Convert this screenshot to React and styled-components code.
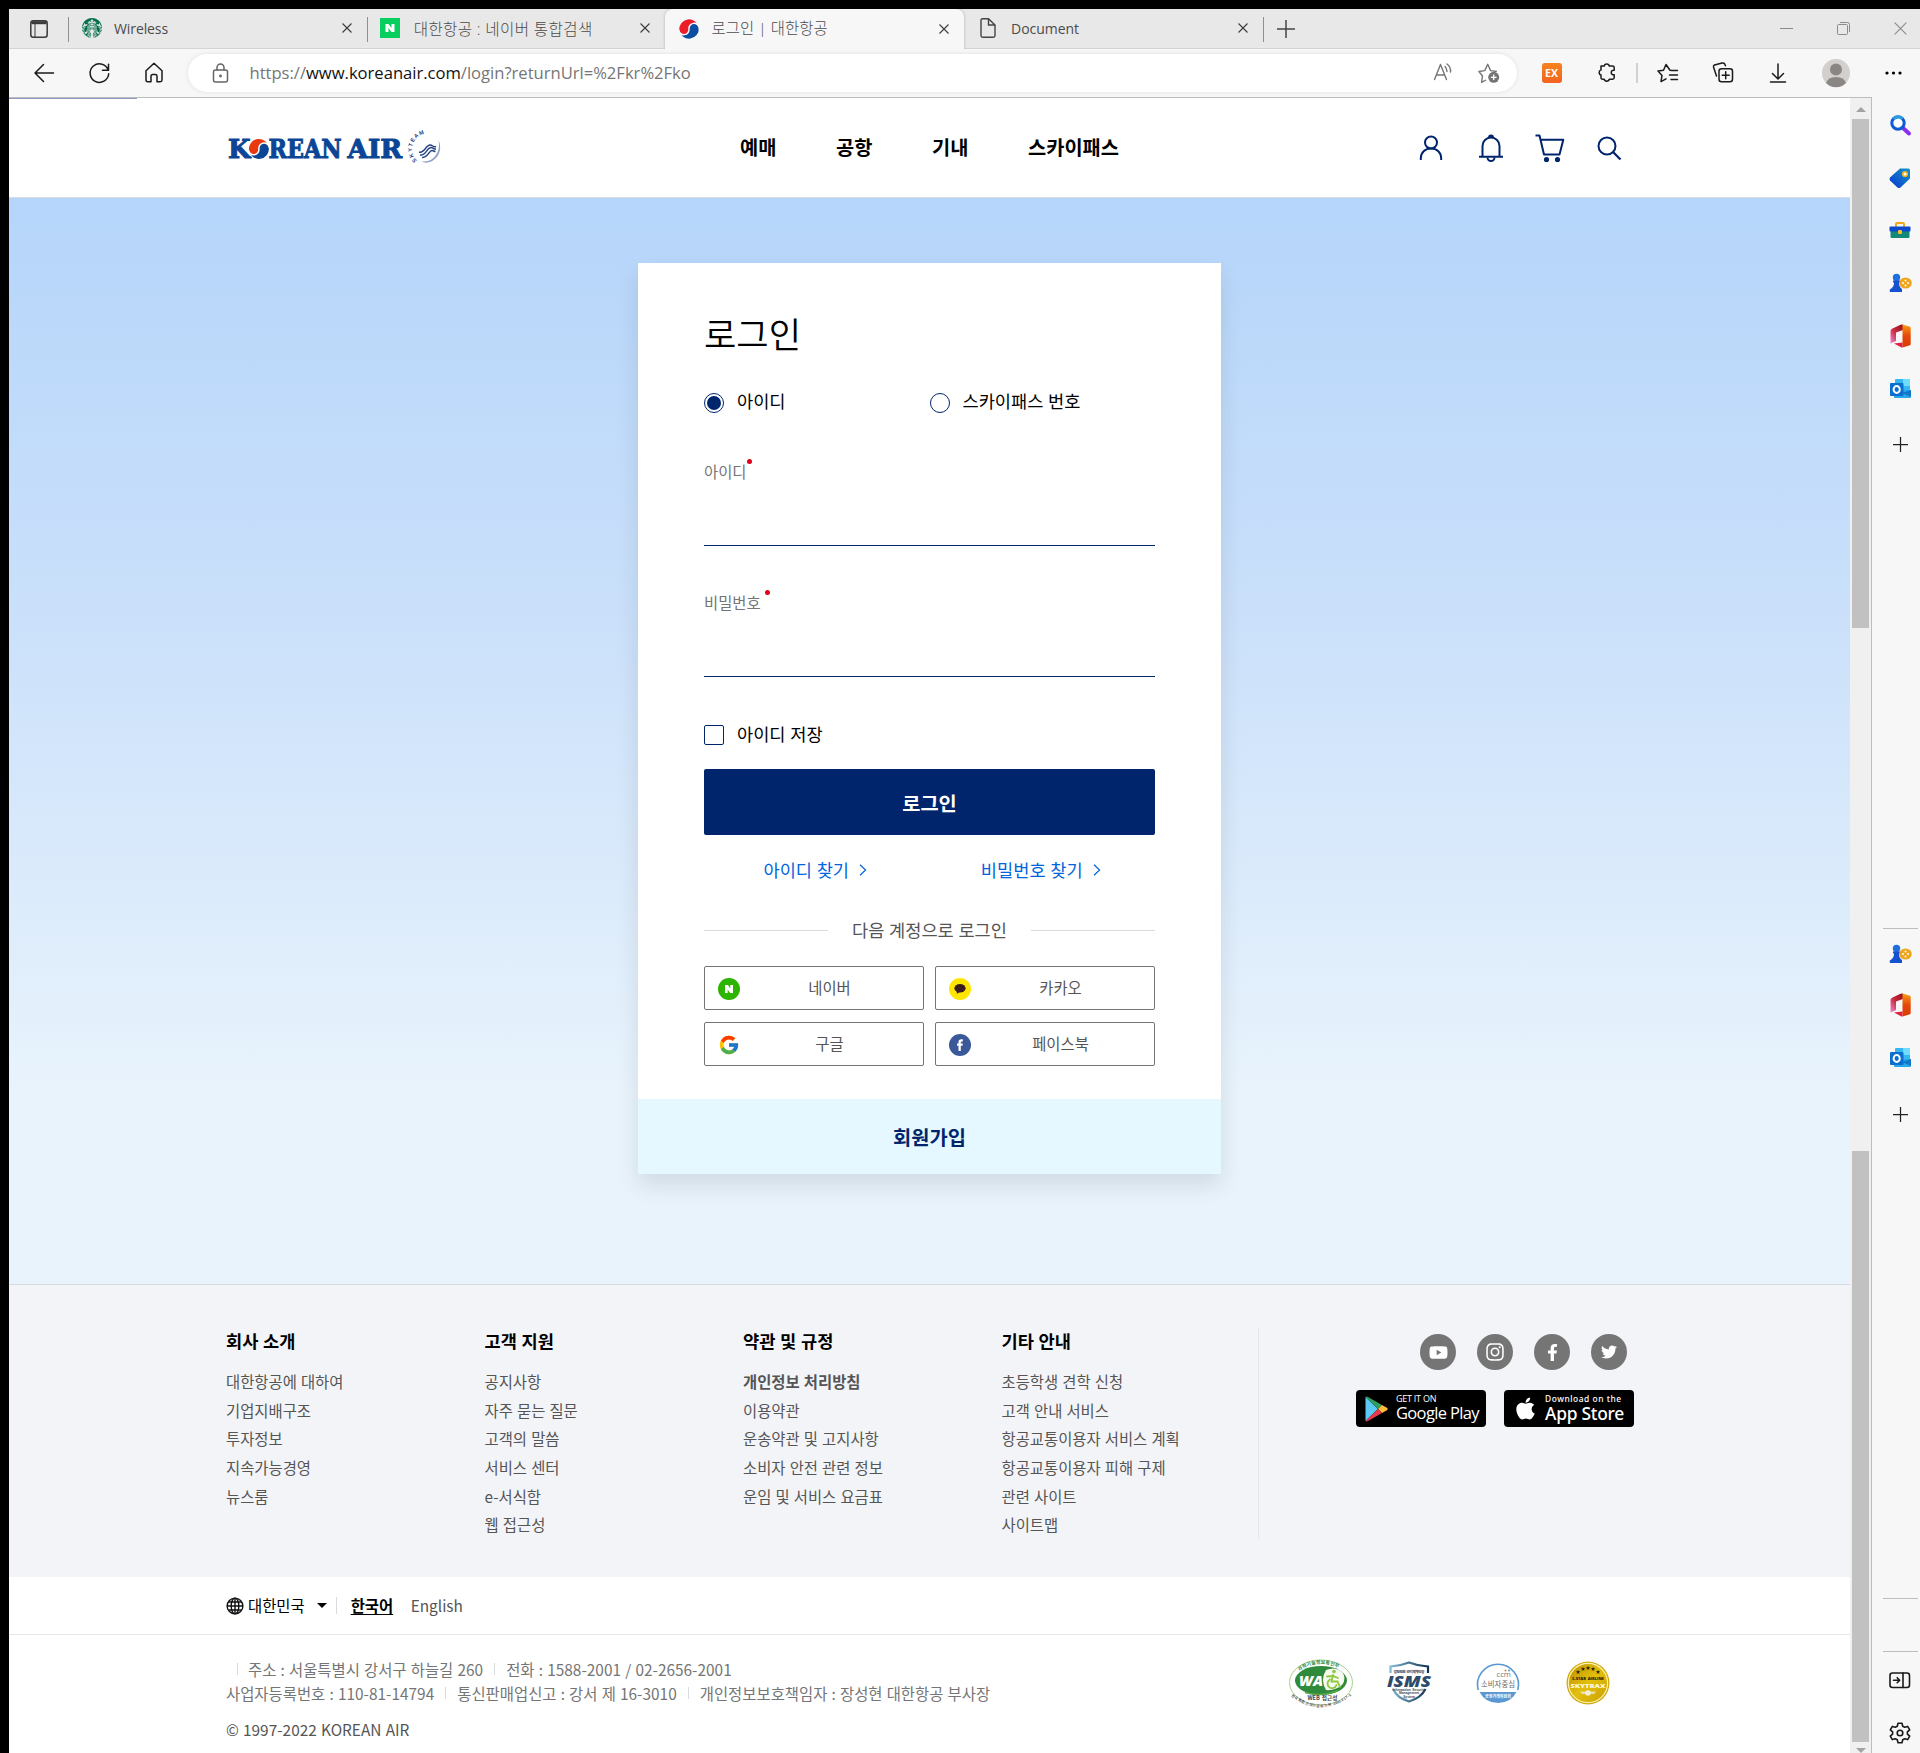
import React from "react";
import styled, { createGlobalStyle, css } from "styled-components";
import { FaYoutube, FaInstagram, FaFacebookF, FaTwitter, FaApple } from "react-icons/fa";
import { FcGoogle } from "react-icons/fc";
import { SiStarbucks } from "react-icons/si";

const kr = `"Noto Sans CJK KR", "Noto Sans", sans-serif`;
const ui = `"Open Sans", "Noto Sans CJK KR", sans-serif`;
const navy = "#00256c";

const GlobalStyle = createGlobalStyle`
  * { box-sizing: border-box; }
  body { margin: 0; background: #000; }
  svg { display: block; flex: none; overflow: visible; }
  h1, h2, ul, p { margin: 0; padding: 0; font-weight: inherit; font-size: inherit; }
  ul { list-style: none; }
  button { font: inherit; padding: 0; margin: 0; cursor: pointer; word-spacing: inherit; }
`;

/* ---------- browser window ---------- */

const Desktop = styled.div`
  width: 1920px;
  height: 1753px;
  padding: 9px 0 0 9px;
  background: #000;
  overflow: hidden;
`;

const TabStrip = styled.div`
  display: flex;
  height: 40px;
  background: #e8e8e8;
  border-bottom: 1px solid #d4d4d4;
`;

const TabActions = styled.div`
  width: 59px;
  padding: 11px 0 0 21px;
`;

const Tab = styled.div`
  display: flex;
  align-items: center;
  width: 298.7px;
  height: ${(p) => (p.$active ? 40 : 39)}px;
  padding: 0 15px 1px ${(p) => p.$left || 14}px;
  font-family: ${ui};
  font-size: ${(p) => p.$size || 14}px;
  line-height: 20px;
  letter-spacing: ${(p) => p.$track || 0}px;
  color: #4b4b4b;
  ${(p) =>
    p.$active &&
    css`
      background: #f7f7f7;
      border-radius: 8px 8px 0 0;
      box-shadow: 0 0 3px rgba(0, 0, 0, 0.25);
      clip-path: inset(0 -4px 0 -4px);
    `}
`;

const TabTitle = styled.span`
  flex: 1;
  margin-left: ${(p) => p.$gap || 12}px;
  padding-top: 1px;
  white-space: nowrap;
  font-weight: ${(p) => p.$weight || 400};
`;

const TabDivider = styled.i`
  width: 1px;
  height: 25px;
  margin-top: 8px;
  margin-right: -1px;
  background: #8f8f8f;
`;

const NewTab = styled.div`
  padding: 11px 0 0 14px;
  flex: 1;
`;

const WindowControls = styled.div`
  display: flex;
  align-items: center;
  gap: 44px;
  padding: 0 13.500px 1px 0;
`;

const Toolbar = styled.div`
  display: flex;
  align-items: center;
  height: 48px;
  padding: 0 0 1px 24px;
  background: #f7f7f7;
`;

const NavButtons = styled.div`
  display: flex;
  align-items: center;
  gap: 34px;
  width: 156px;
`;

const AddressBar = styled.div`
  display: flex;
  align-items: center;
  flex: none;
  width: 1329px;
  height: 38px;
  padding: 0 17px 0 24px;
  background: #fff;
  border-radius: 19px;
  box-shadow: 0 0 4px rgba(0, 0, 0, 0.1);
`;

const Url = styled.span`
  flex: 1;
  margin-left: 21px;
  font: 16.6px/22px ${ui};
  letter-spacing: -0.01px;
  color: #767676;
  b {
    font-weight: 400;
    color: #111;
  }
`;

const UrlTools = styled.div`
  display: flex;
  gap: 23.500px;
`;

const ExtTools = styled.div`
  display: flex;
  align-items: center;
  margin-left: 7.5px;
`;

const ToolSlot = styled.div`
  display: flex;
  align-items: center;
  justify-content: center;
  flex: none;
  width: ${(p) => p.$width || 55}px;
`;

const ExBadge = styled.span`
  width: 20px;
  height: 20px;
  border-radius: 3px;
  background: linear-gradient(#f58220, #f2641f);
  color: #fff;
  font: 700 10.5px/20px "Open Sans", sans-serif;
  text-align: center;
`;

const ToolDivider = styled.i`
  width: 2px;
  height: 20px;
  background: #d0d0d0;
`;

const WindowBody = styled.div`
  display: flex;
  height: 1656px;
`;

const Viewport = styled.div`
  display: flex;
  width: 1863px;
  border-top: 1px solid #bdbdbd;
  border-right: 1px solid #bdbdbd;
  position: relative;
`;

const LoadingBar = styled.i`
  position: absolute;
  top: 0;
  left: 0;
  width: 128px;
  height: 1px;
  background: #8f9ac4;
`;

const Page = styled.div`
  width: 1841px;
  background: #fff;
  font-family: ${kr};
  color: #000;
  word-spacing: 0.7px;
`;

const Scrollbar = styled.div`
  display: flex;
  flex-direction: column;
  align-items: center;
  width: 21px;
  padding-top: 9px;
  background: #f0f0f0;
`;

const Arrow = styled.i`
  flex: none;
  margin-top: ${(p) => p.$gap || 0}px;
  border: 5px solid transparent;
  ${(p) =>
    p.$up
      ? css`
          border-top: 0;
          border-bottom-color: #a3a3a3;
        `
      : css`
          border-bottom: 0;
          border-top-color: #a3a3a3;
        `}
`;

const Thumb = styled.i`
  flex: none;
  width: 17px;
  height: ${(p) => p.$height}px;
  margin-top: ${(p) => p.$gap}px;
  background: #c1c1c1;
`;

/* ---------- side bar ---------- */

const Sidebar = styled.div`
  display: flex;
  flex-direction: column;
  width: 48px;
  background: #f7f7f7;
`;

const SideGroup = styled.div`
  display: flex;
  flex-direction: column;
  align-items: center;
  height: ${(p) => p.$height}px;
  padding: ${(p) => p.$top || 0}px 0 0 8px;
`;

const SideRule = styled.i`
  width: 35px;
  height: 1px;
  margin-left: 11px;
  background: #bdbdbd;
`;

const SideItem = styled.div`
  display: flex;
  align-items: center;
  justify-content: center;
  width: 48px;
  height: ${(p) => p.$height || 52.6}px;
  flex: none;
`;

/* ---------- site header ---------- */

const Header = styled.header`
  display: flex;
  align-items: center;
  height: 100px;
  padding-left: 217px;
  border-bottom: 1px solid #d9dbe1;
`;

const Brand = styled.div`
  width: 514px;
`;

const MainNav = styled.nav`
  display: flex;
  gap: 59.6px;
  width: 661px;
  font-weight: 700;
  font-size: 19.8px;
  line-height: 28px;
  white-space: nowrap;
  padding-bottom: 2px;
`;

const HeaderIcons = styled.div`
  display: flex;
  align-items: center;
`;

const HeaderIcon = styled.a`
  display: flex;
  justify-content: center;
  width: ${(p) => p.$width || 59.4}px;
`;

/* ---------- login ---------- */

const Main = styled.main`
  display: flex;
  justify-content: center;
  align-items: flex-start;
  height: 1086px;
  padding-top: 65px;
  background: linear-gradient(#b5d5fa 0, #cae0fa 38%, #e8f3fc 82%);
`;

const Card = styled.section`
  width: 583px;
  background: #fff;
  box-shadow: 0 11px 22px rgba(0, 0, 0, 0.1);
`;

const CardBody = styled.div`
  height: 836px;
  padding: 48px 66px 0;
`;

const Title = styled.h1`
  font-size: 35.2px;
  font-weight: 350;
  line-height: 44px;
`;

const Choices = styled.div`
  display: grid;
  grid-template-columns: 225.5px 225.5px;
  margin-top: 38px;
`;

const Choice = styled.label`
  display: flex;
  align-items: center;
  gap: 13px;
  height: 20px;
  margin-top: ${(p) => p.$top || 0}px;
  font-size: 17.6px;
  line-height: 20px;
  span {
    padding-bottom: ${(p) => p.$lift}px;
  }
`;

const Mark = styled.i`
  display: flex;
  align-items: center;
  justify-content: center;
  width: 20px;
  height: 20px;
  border: 1px solid ${navy};
  border-radius: ${(p) => (p.$round ? "50%" : "2px")};
  &::after {
    content: "";
    display: ${(p) => (p.$on ? "block" : "none")};
    width: 14px;
    height: 14px;
    border-radius: 50%;
    background: ${navy};
  }
`;

const Field = styled.div`
  margin-top: ${(p) => p.$top}px;
`;

const FieldLabel = styled.label`
  display: block;
  position: relative;
  width: fit-content;
  height: 22px;
  font-size: 15.4px;
  line-height: 20px;
  color: #757575;
  &::after {
    content: "";
    position: absolute;
    top: -2px;
    right: ${(p) => p.$dot}px;
    width: 5px;
    height: 5px;
    border-radius: 50%;
    background: #e1001a;
  }
`;

const TextInput = styled.input`
  display: block;
  width: 100%;
  height: 63px;
  border: 0;
  border-bottom: 1px solid ${navy};
  background: transparent;
  outline: 0;
`;

const Submit = styled.button`
  display: block;
  width: 100%;
  height: 66px;
  margin-top: 24px;
  border: 0;
  border-radius: 2px;
  background: ${navy};
  color: #fff;
  font-weight: 700;
  font-size: 19.8px;
`;

const FindLinks = styled.div`
  display: grid;
  grid-template-columns: 1fr 1fr;
  margin-top: 23px;
`;

const FindLink = styled.a`
  display: flex;
  align-items: center;
  justify-content: center;
  gap: 10px;
  height: 24px;
  padding-right: 3px;
  font-size: 17.6px;
  line-height: 24px;
  color: #0064de;
`;

const OrLine = styled.div`
  display: flex;
  align-items: center;
  justify-content: space-between;
  height: 24px;
  margin-top: 36px;
  font-size: 17.6px;
  line-height: 22px;
  color: #555;
  &::before,
  &::after {
    content: "";
    width: 124px;
    height: 1px;
    background: #d9dbe1;
  }
`;

const SocialGrid = styled.div`
  display: grid;
  grid-template-columns: 1fr 1fr;
  gap: 12px 11px;
  margin-top: 24px;
`;

const SocialButton = styled.button`
  display: flex;
  align-items: center;
  height: 44px;
  padding: 0 13px;
  border: 1px solid #757575;
  border-radius: 2px;
  background: #fff;
  color: #555;
  font-size: 15.4px;
  span {
    flex: 1;
    padding: 0 0 3px 9px;
  }
  svg {
    margin-top: 2px;
  }
`;

const Join = styled.a`
  display: flex;
  align-items: center;
  justify-content: center;
  height: 75px;
  background: #e5f8ff;
  color: ${navy};
  font-size: 19.8px;
  line-height: 28px;
  font-weight: 700;
`;

/* ---------- footer ---------- */

const FooterTop = styled.div`
  display: flex;
  height: 293px;
  padding: 43px 0 0 217px;
  border-top: 1px solid #d5d9e0;
  background: #f3f4f8;
`;

const LinkColumns = styled.div`
  display: grid;
  grid-template-columns: repeat(4, 258.5px);
  width: 1033px;
  height: 211px;
  padding-top: 1px;
  border-right: 1px solid #e5e6ec;
`;

const ColumnTitle = styled.h2`
  font-weight: 700;
  font-size: 17.6px;
  line-height: 24px;
  margin-bottom: 15px;
`;

const FooterLink = styled.li`
  height: 28.7px;
  font-size: 15.4px;
  line-height: 26px;
  color: #555;
  font-weight: ${(p) => (p.$bold ? 700 : 400)};
  white-space: nowrap;
`;

const FooterSide = styled.div`
  display: flex;
  flex-direction: column;
  align-items: flex-end;
  width: 375px;
  padding-top: 6px;
  word-spacing: 0;
`;

const SnsRow = styled.div`
  display: flex;
  gap: 21px;
  padding-right: 7px;
`;

const SnsLink = styled.a`
  display: flex;
  align-items: center;
  justify-content: center;
  width: 36px;
  height: 36px;
  border-radius: 50%;
  background: #757575;
  color: #fff;
`;

const StoreRow = styled.div`
  display: flex;
  gap: 18px;
  margin-top: 20px;
`;

const StoreBadge = styled.a`
  display: flex;
  align-items: center;
  width: 130px;
  height: 37px;
  padding-left: ${(p) => p.$pad}px;
  gap: ${(p) => p.$gap}px;
  border-radius: 4px;
  background: #000;
  color: #fff;
  white-space: nowrap;
`;

const StoreText = styled.span`
  display: flex;
  flex-direction: column;
  font-family: ${(p) => p.$font};
  font-size: ${(p) => p.$size}px;
  font-weight: 500;
  line-height: 18px;
  letter-spacing: ${(p) => p.$track}px;
  padding-bottom: 2px;
  small {
    font-size: ${(p) => p.$small}px;
    line-height: 10px;
    letter-spacing: ${(p) => p.$smallTrack}px;
    font-weight: 500;
  }
`;

const LocaleBar = styled.div`
  display: flex;
  align-items: center;
  height: 57px;
  padding-left: 217px;
  font-size: 15.4px;
  line-height: 20px;
`;

const LocaleText = styled.a`
  margin-left: ${(p) => p.$left}px;
  padding-bottom: 2px;
  color: ${(p) => p.$color || "#000"};
  ${(p) =>
    p.$current &&
    css`
      font-weight: 700;
      text-decoration: underline;
      text-underline-offset: 2px;
    `}
`;

const Caret = styled.i`
  margin: -1px 0 0 12px;
  border: 5px solid transparent;
  border-top-color: #000;
  border-bottom: 0;
`;

const Bar = styled.i`
  display: inline-block;
  flex: none;
  width: 1px;
  height: ${(p) => p.$height}px;
  margin: ${(p) => p.$margin};
  background: #d9dbe1;
`;

const Legal = styled.div`
  display: flex;
  height: 119px;
  padding: 22px 0 0 217px;
  border-top: 1px solid #e5e6ec;
`;

const LegalText = styled.div`
  width: 1062px;
  font-size: 15.4px;
  line-height: 24px;
  letter-spacing: 0.02px;
  color: #757575;
`;

const LegalLine = styled.p`
  display: flex;
  height: 24px;
`;

const Copyright = styled.p`
  margin-top: 12px;
  color: #555;
`;

const Badges = styled.div`
  display: flex;
  align-items: flex-start;
  padding-top: 1px;
`;

const Badge = styled.span`
  margin: ${(p) => p.$top}px 0 0 ${(p) => p.$left || 0}px;
`;

/* ---------- drawings ---------- */

const line = { fill: "none", stroke: "#1b1b1b", strokeWidth: 1.5, strokeLinecap: "round", strokeLinejoin: "round" };
const navyLine = { fill: "none", stroke: navy, strokeWidth: 2, strokeLinejoin: "round" };

const CloseX = ({ size = 10, color = "#3b3b3b" }) => (
  <svg width={size} height={size} viewBox="0 0 10 10">
    <path d="M.5.5l9 9M9.5.5l-9 9" stroke={color} strokeWidth={11 / size} fill="none" />
  </svg>
);

const Plus = ({ size, color = "#222" }) => (
  <svg width={size} height={size} viewBox="0 0 18 18">
    <path d="M9 0v18M0 9h18" stroke={color} strokeWidth="1.5" />
  </svg>
);

const Taegeuk = ({ red = "#ec1c2b", blue = "#0c4da2", tilt = -8 }) => (
  <g transform={`rotate(${tilt} 10 10)`}>
    <path d="M.3 10A9.700 9.700 0 0 1 19.700 10A4.850 4.850 0 0 0 10 10A4.850 4.850 0 0 1 .3 10z" fill={red} />
    <path d="M19.700 10A9.700 9.700 0 0 1 .3 10A4.850 4.850 0 0 0 10 10A4.850 4.850 0 0 1 19.700 10z" fill={blue} />
    <path d="M-.2 9.800A5 5 0 0 0 10 10A5 5 0 0 1 20.200 10.200" fill="none" stroke="#fff" strokeWidth="1.400" />
  </g>
);

const BrandLogo = () => (
  <svg width="216" height="36" viewBox="226 129 216 36">
    <g fill="#0b4595" stroke="#0b4595" strokeWidth="1" fontFamily="DejaVu Serif" fontWeight="700" fontSize="25.500">
      <text x="228" y="157" textLength="22.500" lengthAdjust="spacingAndGlyphs">K</text>
      <text x="268.500" y="157" textLength="73" lengthAdjust="spacingAndGlyphs">REAN</text>
      <text x="347.500" y="157" textLength="54.500" lengthAdjust="spacingAndGlyphs">AIR</text>
    </g>
    <circle cx="258.800" cy="148" r="10.700" fill="#fff" />
    <g transform="translate(248.600 137.600) scale(1.030)">
      <Taegeuk red="#e8380d" blue="#0b4595" />
    </g>
    <path id="sky-arc" d="M417 159.500a13 13 0 0 1 21-23" fill="none" />
    <text fontFamily="Liberation Sans" fontWeight="700" fontSize="5.600" fill="#23407f" letterSpacing="1.100">
      <textPath href="#sky-arc">SKYTEAM</textPath>
    </text>
    <path d="M438.500 139c3.500 7 1.500 16-5.500 20.500-4.500 2.800-9 2.600-12 .8 5 .6 10-.3 13.500-4.300 4.300-5 5.300-11 4-17z" fill="#8e9fc4" />
    <path d="M419 151c5 2 7-7 11-7 3 0 3 2.500 6 1.500M420 154c6 1 7-7.500 11-7.500 2 0 3 2 5 1.500M422 156.500c6 .5 7-7 10-7 1.500 0 2 1 3.500 1" stroke="#23407f" strokeWidth="1.400" fill="none" />
  </svg>
);

const PersonIcon = () => (
  <svg width="24" height="26" viewBox="0 0 24 26" {...navyLine}>
    <circle cx="12" cy="7.500" r="6" />
    <path d="M1.800 25v-1.500C1.800 17.500 6 13.500 12 13.500s10.200 4 10.200 10V25" />
  </svg>
);
const BellIcon = () => (
  <svg width="26" height="28" viewBox="0 0 26 28" {...navyLine}>
    <path d="M4.500 22.500V12a8.500 8.500 0 0 1 17 0v10.500M1 22.800h24" />
    <path d="M11 3.500a2 2 0 0 1 4 0" fill={navy} />
    <path d="M9.500 23.500a3.500 3.500 0 0 0 7 0" />
  </svg>
);
const CartIcon = () => (
  <svg width="30" height="28" viewBox="0 0 30 28" {...navyLine}>
    <path d="M.5 1.500h4L9 20.500h15.500l3.800-14.800H6" />
    <circle cx="11.500" cy="25.500" r="1.600" fill={navy} />
    <circle cx="22.500" cy="25.500" r="1.600" fill={navy} />
  </svg>
);
const SearchIcon = () => (
  <svg width="26" height="26" viewBox="0 0 26 26" {...navyLine}>
    <circle cx="11" cy="11" r="8.500" />
    <path d="M17 17l7.500 7.500" strokeWidth="2.300" />
  </svg>
);
const Chevron = () => (
  <svg width="8" height="12" viewBox="0 0 8 12">
    <path d="M1 .8L6.600 6 1 11.200" fill="none" stroke="#0064de" strokeWidth="1.200" />
  </svg>
);

const EdgeSearch = () => (
  <svg width="21" height="21" viewBox="0 0 21 21">
    <path d="M13 13l6 5.500" stroke="#8b2ff0" strokeWidth="4" strokeLinecap="round" />
    <circle cx="8" cy="8" r="6.200" fill="#fff" stroke="#0f5ad6" strokeWidth="3" />
    <path d="M3.500 4A6.200 6.200 0 0 1 12.500 3.700" stroke="#2b9fe0" strokeWidth="3" fill="none" />
  </svg>
);
const EdgeTag = () => (
  <svg width="22" height="22" viewBox="0 0 22 22">
    <defs>
      <linearGradient id="tag" x1="1" y1="0" x2="0" y2="1">
        <stop offset="0" stopColor="#1597c9" />
        <stop offset="1" stopColor="#0a35d0" />
      </linearGradient>
    </defs>
    <path d="M11 1.500h8.500q1.500 0 1.500 1.500v8.500L11.500 20.500q-1.500 1-3 0L1 13.500q-1-1.500 0-3z" fill="url(#tag)" />
    <circle cx="16" cy="7" r="2.300" fill="#fff" stroke="#f6b21b" strokeWidth="1.600" />
  </svg>
);
const EdgeTools = () => (
  <svg width="22" height="18" viewBox="0 0 22 18">
    <path d="M7 6V3q0-1 1-1h6q1 0 1 1v3" fill="none" stroke="#f0a818" strokeWidth="2" />
    <rect x="1.500" y="9" width="19" height="8" rx="1" fill="#14897a" />
    <rect x="0.500" y="5.500" width="21" height="5" rx="1" fill="#0b49cf" />
    <rect x="9" y="9" width="4" height="4" rx="1" fill="#f6c02b" />
  </svg>
);
const EdgeGames = () => (
  <svg width="23" height="20" viewBox="0 0 23 20">
    <circle cx="7.500" cy="4.500" r="3.700" fill="#1f6fe0" />
    <path d="M4 7.500h7v1.500L10 10q0 4 3 6v3H.8v-2.500Q5 14 5 10L4 9z" fill="#1652d0" />
    <ellipse cx="16.500" cy="10" rx="6.300" ry="5.600" fill="#f0a51e" />
    <g fill="#fff">
      <circle cx="16.500" cy="7.500" r="1" />
      <circle cx="16.500" cy="12.500" r="1" />
      <circle cx="14" cy="10" r="1" />
      <circle cx="19" cy="10" r="1" />
    </g>
  </svg>
);
const EdgeOffice = () => (
  <svg width="21" height="24" viewBox="0 0 21 24">
    <defs>
      <linearGradient id="off-l" x1="1" y1="0" x2="0" y2="1">
        <stop offset="0" stopColor="#8f1019" />
        <stop offset=".5" stopColor="#c9283f" />
        <stop offset="1" stopColor="#f28bd0" />
      </linearGradient>
      <linearGradient id="off-r" x1="0" y1="0" x2="0" y2="1">
        <stop offset="0" stopColor="#fb9e14" />
        <stop offset=".5" stopColor="#e5480b" />
        <stop offset="1" stopColor="#d83b01" />
      </linearGradient>
    </defs>
    <path d="M13 .5V6L6 8.500V17L.5 19.500V7q0-1.500 1.500-2.300L10.500.8z" fill="url(#off-l)" />
    <path d="M12.500.5L20 2.800q.7.300.7 1v16.400q0 .7-.7 1L12.500 23.500z" fill="url(#off-r)" />
    <path d="M4 19.500L12.500 18.500v5H11.500z" fill="#e0213b" />
  </svg>
);
const EdgeOutlook = () => (
  <svg width="21" height="21" viewBox="0 0 21 21">
    <rect x="5" y="1" width="15" height="14" rx="1" fill="#35b8f1" />
    <path d="M13 1h7v7h-7z" fill="#6fdcff" />
    <path d="M4 12h17v7q0 1-1 1H5q-1 0-1-1z" fill="#28a8ea" />
    <path d="M21 12v7L12 15z" fill="#1277c4" />
    <rect x="0" y="5" width="13.500" height="13" rx="1" fill="#0a6fcf" />
    <ellipse cx="6.700" cy="11.500" rx="3.100" ry="3.400" fill="none" stroke="#fff" strokeWidth="2" />
  </svg>
);
const PanelIcon = () => (
  <svg width="22" height="17" viewBox="0 0 22 17" {...line} strokeWidth="1.600">
    <rect x="1" y="1" width="19.500" height="14.500" rx="2.500" />
    <path d="M14 1v14.500M4.500 8.200h6M8.200 5.700l2.500 2.500-2.500 2.500" />
  </svg>
);
const GearIcon = () => (
  <svg width="22" height="22" viewBox="0 0 22 22" {...line} strokeWidth="1.600">
    <path d="M9 1.200h4l.7 3 2 1.100 3-.9 2 3.400-2.300 2.100v2.200l2.300 2.100-2 3.400-3-.9-2 1.100-.7 3H9l-.7-3-2-1.100-3 .9-2-3.400 2.300-2.100V9.900L1.300 7.800l2-3.400 3 .9 2-1.100z" />
    <circle cx="11" cy="11" r="2.800" />
  </svg>
);

const GlobeIcon = () => (
  <svg width="18" height="18" viewBox="0 0 18 18" fill="none" stroke="#111" strokeWidth="1.400">
    <circle cx="9" cy="9" r="7.900" />
    <ellipse cx="9" cy="9" rx="3.800" ry="7.900" />
    <path d="M9 1v16M1 9h16M2.500 5h13M2.500 13h13" />
  </svg>
);

const PlayIcon = () => (
  <svg width="23" height="26" viewBox="0 0 23 26">
    <path d="M.5 1v24L13 13z" fill="#5bc9f4" />
    <path d="M.5 1L13 13l4-4L2.500.7Q1 .2.500 1z" fill="#2f9e62" />
    <path d="M17 9l5.300 3.100q.8.900 0 1.800L17 17l-4-4z" fill="#fdbd39" />
    <path d="M.5 25L13 13l4 4-14.500 8.300Q1 25.800.500 25z" fill="#e8394b" />
  </svg>
);

const WaBadge = () => (
  <svg width="66" height="52" viewBox="0 0 66 52">
    <ellipse cx="33" cy="24.500" rx="31.500" ry="22.500" fill="#fff" stroke="#a9d08e" strokeWidth="1" />
    <ellipse cx="33" cy="22.500" rx="26" ry="14.500" fill="#2f8a3b" />
    <path d="M38 12q9-4 16 2 5 6 0 13-7 6-16 5-6-10 0-20z" fill="#f4faf0" />
    <text x="11" y="27.500" fontFamily="Open Sans" fontStyle="italic" fontWeight="800" fontSize="14" fill="#fff" textLength="24" lengthAdjust="spacingAndGlyphs">WA</text>
    <g stroke="#8fc73e" strokeWidth="1.800" strokeLinecap="round" fill="none">
      <circle cx="46" cy="13.500" r="1.800" fill="#8fc73e" stroke="none" />
      <path d="M45 17l-1.500 6.500h6l2.500 5.500M39 18.500l6-.5 5 2" />
      <path d="M42 21.500a4.600 4.600 0 1 0 6.500 5.500" />
    </g>
    <path d="M17 34.500q16 5 33-2" stroke="#5aa845" strokeWidth="1.500" fill="none" />
    <path id="wa-top" d="M11 13q21-14.500 45 0" fill="none" />
    <path id="wa-low" d="M3 37.500q30 23 60 0" fill="none" />
    <text fontFamily="Noto Sans CJK KR" fontWeight="700" fontSize="5" fill="#2f8a3b">
      <textPath href="#wa-top">과학기술정보통신부</textPath>
    </text>
    <text x="19.500" y="42" fontFamily="Noto Sans CJK KR" fontWeight="700" fontSize="5.600" fill="#444">WEB 접근성</text>
    <text fontFamily="Liberation Sans" fontWeight="700" fontSize="3.600" fill="#555">
      <textPath href="#wa-low">한국웹접근성인증평가원 2021.2.17~2022.2.16</textPath>
    </text>
  </svg>
);

const IsmsBadge = () => (
  <svg width="44" height="42" viewBox="0 0 44 42">
    <defs>
      <linearGradient id="shield" x1="0" x2="1">
        <stop offset="0" stopColor="#7fb9d3" />
        <stop offset="1" stopColor="#123054" />
      </linearGradient>
    </defs>
    <path d="M3.500 12V5.500Q13 5 22 1.500 31 5 41 5.500V12M6 28q4 9 16 12.500Q34 37 38.500 28" fill="none" stroke="url(#shield)" strokeWidth="2.200" />
    <text x="6.500" y="11.500" fontFamily="Noto Sans CJK KR" fontWeight="700" fontSize="3.800" fill="#445" textLength="31">정보보호 관리체계인증</text>
    <text x="0" y="25.500" fontFamily="Open Sans" fontStyle="italic" fontWeight="800" fontSize="15.500" fill="#2e4a6b" textLength="44" lengthAdjust="spacingAndGlyphs">ISMS</text>
    <g fontFamily="Liberation Sans" fontWeight="700" fontSize="3.300" fill="#345" textAnchor="middle">
      <text x="22" y="29.500">Information Security</text>
      <text x="22" y="33">Management</text>
      <text x="22" y="36.500">System</text>
    </g>
  </svg>
);

const CcmBadge = () => (
  <svg width="44" height="44" viewBox="0 0 44 44">
    <path d="M3.500 31h37a21 21 0 0 1-37 0z" fill="#5b98d2" />
    <path d="M2.200 29a20.500 20.500 0 1 1 39.600 0" fill="none" stroke="#5b98d2" strokeWidth="1.600" />
    <text x="20.500" y="16" fontFamily="Open Sans" fontSize="8" fill="#777" textLength="14.500" lengthAdjust="spacingAndGlyphs">ccm</text>
    <circle cx="29.500" cy="9.500" r="1" fill="#ef7d22" />
    <circle cx="33" cy="9.500" r="1" fill="#3aa0dc" />
    <text x="5" y="26" fontFamily="Noto Sans CJK KR" fontSize="8.500" fill="#666" textLength="34" lengthAdjust="spacingAndGlyphs">소비자중심</text>
    <text x="22" y="37" fontFamily="Noto Sans CJK KR" fontWeight="700" fontSize="4" fill="#fff" textAnchor="middle">공정거래위원회</text>
  </svg>
);

const SkytraxBadge = () => (
  <svg width="44" height="44" viewBox="0 0 44 44">
    <defs>
      <linearGradient id="gold" x1="0" y1="0" x2="1" y2="1">
        <stop offset="0" stopColor="#b98f00" />
        <stop offset=".5" stopColor="#e3bf0d" />
        <stop offset="1" stopColor="#c79f00" />
      </linearGradient>
    </defs>
    <circle cx="22" cy="22" r="21.500" fill="#d0a90c" />
    <circle cx="22" cy="22" r="19.600" fill="url(#gold)" stroke="#fff3b0" strokeWidth="1.200" />
    <g fontFamily="DejaVu Sans" fontSize="6" fill="#2b2200" textAnchor="middle">
      <text x="12" y="12.500">★</text>
      <text x="17" y="10">★</text>
      <text x="22" y="9">★</text>
      <text x="27" y="10">★</text>
      <text x="32" y="12.500">★</text>
    </g>
    <text x="6" y="18.500" fontFamily="Open Sans" fontWeight="800" fontSize="4.200" fill="#2b2200" textLength="32" lengthAdjust="spacingAndGlyphs">5-STAR AIRLINE</text>
    <text x="4.500" y="26.500" fontFamily="Open Sans" fontWeight="800" fontSize="5" fill="#fff8dc" textLength="35" lengthAdjust="spacingAndGlyphs">SKYTRAX</text>
    <path d="M14 30.500h16l-2 2.500H16z" fill="#eadfae" />
    <circle cx="22" cy="32" r="2.800" fill="#f5efd6" />
  </svg>
);

const Naver = () => (
  <svg width="22" height="22" viewBox="0 0 22 22">
    <circle cx="11" cy="11" r="11" fill="#2db400" />
    <path d="M7 7h3l2.300 3.600V7H15v8h-3l-2.300-3.600V15H7z" fill="#fff" />
  </svg>
);
const Kakao = () => (
  <svg width="22" height="22" viewBox="0 0 22 22">
    <circle cx="11" cy="11" r="11" fill="#ffe600" />
    <ellipse cx="11" cy="10.300" rx="5.600" ry="4.300" fill="#3b1d1e" />
    <path d="M8 13l-.3 3 3-2z" fill="#3b1d1e" />
  </svg>
);
const Facebook = () => (
  <svg width="22" height="22" viewBox="0 0 22 22">
    <circle cx="11" cy="11" r="11" fill="#3b5998" />
    <path d="M9.500 17v-5.300H8V9.500h1.500V8q0-2.700 2.700-2.700h1.600v2.100h-1q-1 0-1 .9v1.200h2l-.3 2.200h-1.700V17z" fill="#fff" />
  </svg>
);
const Google = () => <FcGoogle size={22} />;

/* ---------- data ---------- */

const columns = [
  ["회사 소개", ["대한항공에 대하여", "기업지배구조", "투자정보", "지속가능경영", "뉴스룸"]],
  ["고객 지원", ["공지사항", "자주 묻는 질문", "고객의 말씀", "서비스 센터", "e-서식함", "웹 접근성"]],
  ["약관 및 규정", ["개인정보 처리방침", "이용약관", "운송약관 및 고지사항", "소비자 안전 관련 정보", "운임 및 서비스 요금표"]],
  ["기타 안내", ["초등학생 견학 신청", "고객 안내 서비스", "항공교통이용자 서비스 계획", "항공교통이용자 피해 구제", "관련 사이트", "사이트맵"]],
];

const socials = [
  ["네이버", Naver],
  ["카카오", Kakao],
  ["구글", Google],
  ["페이스북", Facebook],
];

/* ---------- sections ---------- */

const Tabs = () => (
  <TabStrip>
    <TabActions>
      <svg width="18" height="18" viewBox="0 0 18 18" fill="none" stroke="#3a3a3a" strokeWidth="1.500">
        <rect x=".8" y=".8" width="16.400" height="16.400" rx="2.500" />
        <path d="M1.500 2.700h15" strokeWidth="3" />
        <path d="M5 4v13" strokeWidth="1" />
      </svg>
    </TabActions>
    <TabDivider />
    <Tab $track={-0.1}>
      <SiStarbucks size={20} color="#00704a" />
      <TabTitle>Wireless</TabTitle>
      <CloseX />
    </Tab>
    <TabDivider />
    <Tab $left={13} $size={15.6} $track={0.35}>
      <svg width="20" height="20" viewBox="0 0 20 20">
        <rect width="20" height="20" fill="#06cf5f" />
        <path d="M5.500 6h3l3 4V6h3v8h-3l-3-4v4h-3z" fill="#fff" />
      </svg>
      <TabTitle $gap={14} $weight={300}>대한항공 : 네이버 통합검색</TabTitle>
      <CloseX />
    </Tab>
    <Tab $active $size={15.4} $track={0.1}>
      <svg width="20" height="20" viewBox="0 0 20 20">
        <Taegeuk />
      </svg>
      <TabTitle $gap={12} $weight={300}>로그인 | 대한항공</TabTitle>
      <CloseX />
    </Tab>
    <Tab $track={-0.05}>
      <svg width="20" height="20" viewBox="0 0 20 20" fill="none" stroke="#444" strokeWidth="1.400">
        <path d="M4 .8h6.500L17 7v10.500q0 1.700-1.700 1.700H4.700Q3 19.200 3 17.500V2.500Q3 .8 4.500.8zM10.500 1v6H17" />
      </svg>
      <TabTitle $gap={13}>Document</TabTitle>
      <CloseX />
    </Tab>
    <TabDivider />
    <NewTab>
      <Plus size={18} color="#444" />
    </NewTab>
    <WindowControls>
      <svg width="13" height="13" viewBox="0 0 13 13">
        <path d="M0 6.500h13" stroke="#8a8a8a" />
      </svg>
      <svg width="13" height="13" viewBox="0 0 13 13" fill="none" stroke="#8a8a8a">
        <rect x=".5" y="2.500" width="10" height="10" rx="1" />
        <path d="M3 .5h7.500q2 0 2 2V10" />
      </svg>
      <CloseX size={13} color="#8a8a8a" />
    </WindowControls>
  </TabStrip>
);

const BrowserBar = () => (
  <Toolbar>
    <NavButtons>
      <svg width="22" height="20" viewBox="0 0 22 20" {...line}>
        <path d="M10.500 1.500L2 10l8.500 8.500M2 10h18.500" />
      </svg>
      <svg width="21" height="21" viewBox="0 0 21 21" {...line}>
        <path d="M19.300 8.300a9.300 9.300 0 1 0 .4 3.500M19.500 2.300v6h-6" />
      </svg>
      <svg width="20" height="21" viewBox="0 0 20 21" {...line}>
        <path d="M2 8.700L10 1.300l8 7.400v9.300q0 1.700-1.700 1.700H13v-5.500q0-1.700-1.700-1.700H8.700Q7 12.500 7 14.200v5.500H3.700Q2 19.700 2 18z" />
      </svg>
    </NavButtons>
    <AddressBar>
      <svg width="17" height="20" viewBox="0 0 17 20" {...line} stroke="#666">
        <rect x="1.500" y="7" width="14" height="12" rx="2" />
        <path d="M5 7V4.500a3.500 3.500 0 0 1 7 0V7" />
        <circle cx="8.500" cy="13" r=".7" fill="#666" />
      </svg>
      <Url>
        https://<b>www.koreanair.com</b>/login?returnUrl=%2Fkr%2Fko
      </Url>
      <UrlTools>
        <svg width="21" height="20" viewBox="0 0 21 20" {...line} stroke="#757575" strokeWidth="1.400">
          <path d="M1.500 17.500L7.500 2.500l6 15M3.500 13h8M12 4.500q2 2 2 5M14 2q4 3 3.500 8" />
        </svg>
        <svg width="22" height="21" viewBox="0 0 22 21">
          <path d="M8 18l-4.500 2.300 1-6.300L.9 9.500l5.900-.9 2.900-6.300 2.900 6.300 6.300.9" fill="none" stroke="#757575" strokeWidth="1.400" strokeLinejoin="round" />
          <circle cx="15.700" cy="15.300" r="5.500" fill="#757575" />
          <path d="M15.700 12.500v5.600M12.900 15.300h5.600" stroke="#fff" strokeWidth="1.300" />
        </svg>
      </UrlTools>
    </AddressBar>
    <ExtTools>
      <ToolSlot>
        <ExBadge>EX</ExBadge>
      </ToolSlot>
      <ToolSlot>
        <svg width="19" height="21" viewBox="0 0 19 21" {...line}>
          <path d="M4 4h3.200a2.600 2.600 0 0 1 5.100 0h3.200q1.700 0 1.700 1.700v2.600a2.300 2.300 0 1 0 0 4.400v2.800q0 1.700-1.700 1.700h-3.200a2.600 2.600 0 0 1-5.100 0H5.700Q4 17.200 4 15.500v-2.600a2.600 2.600 0 0 1 0-5z" />
        </svg>
      </ToolSlot>
      <ToolSlot $width={6}>
        <ToolDivider />
      </ToolSlot>
      <ToolSlot>
        <svg width="22" height="20" viewBox="0 0 22 20" {...line}>
          <path d="M13 7.300L9 1.500 6.500 7.200l-5.500.9 4 4.300-1 6.200 5-2.800M14 7.500h6.500M12.500 12H20.500M14 16.500h6.500" />
        </svg>
      </ToolSlot>
      <ToolSlot>
        <svg width="22" height="21" viewBox="0 0 22 21" {...line}>
          <rect x="7" y="6.700" width="13.500" height="13" rx="2.500" />
          <path d="M13.700 9.800v7M10.200 13.300h7M4.500 14L1.500 5q-.3-1.500 1-2L10 1q1.800-.4 2.700 1l.8 1.700" />
        </svg>
      </ToolSlot>
      <ToolSlot>
        <svg width="18" height="20" viewBox="0 0 18 20" {...line}>
          <path d="M9 1v14.500M3.500 10.500L9 16l5.500-5.500M1.500 19h15" />
        </svg>
      </ToolSlot>
      <ToolSlot $width={61}>
        <svg width="28" height="28" viewBox="0 0 28 28">
          <circle cx="14" cy="14" r="14" fill="#d2cfcc" />
          <circle cx="14" cy="10.500" r="6" fill="#8a8684" />
          <path d="M4 24q2-6 10-6t10 6a14 14 0 0 1-20 0z" fill="#8a8684" />
        </svg>
      </ToolSlot>
      <ToolSlot $width={54}>
        <svg width="17" height="4" viewBox="0 0 17 4">
          <circle cx="2" cy="2" r="1.600" />
          <circle cx="8.500" cy="2" r="1.600" />
          <circle cx="15" cy="2" r="1.600" />
        </svg>
      </ToolSlot>
    </ExtTools>
  </Toolbar>
);

const EdgeSidebar = () => (
  <Sidebar>
    <SideGroup $height={831} $top={2}>
      <SideItem><EdgeSearch /></SideItem>
      <SideItem><EdgeTag /></SideItem>
      <SideItem><EdgeTools /></SideItem>
      <SideItem><EdgeGames /></SideItem>
      <SideItem><EdgeOffice /></SideItem>
      <SideItem><EdgeOutlook /></SideItem>
      <SideItem $height={60}><Plus size={15} /></SideItem>
    </SideGroup>
    <SideRule />
    <SideGroup $height={669}>
      <SideItem $height={50}><EdgeGames /></SideItem>
      <SideItem><EdgeOffice /></SideItem>
      <SideItem><EdgeOutlook /></SideItem>
      <SideItem $height={60}><Plus size={15} /></SideItem>
    </SideGroup>
    <SideRule />
    <SideGroup $height={52} />
    <SideRule />
    <SideGroup $height={101} $top={2}>
      <SideItem><PanelIcon /></SideItem>
      <SideItem><GearIcon /></SideItem>
    </SideGroup>
  </Sidebar>
);

const LoginCard = () => (
  <Card>
    <CardBody>
      <Title>로그인</Title>
      <Choices>
        <Choice $lift={4}>
          <Mark $round $on />
          <span>아이디</span>
        </Choice>
        <Choice $lift={4}>
          <Mark $round />
          <span>스카이패스 번호</span>
        </Choice>
      </Choices>
      <Field $top={48}>
        <FieldLabel $dot={-6}>아이디</FieldLabel>
        <TextInput />
      </Field>
      <Field $top={46}>
        <FieldLabel $dot={-9}>비밀번호</FieldLabel>
        <TextInput type="password" />
      </Field>
      <Choice $top={48} $lift={2}>
        <Mark />
        <span>아이디 저장</span>
      </Choice>
      <Submit>로그인</Submit>
      <FindLinks>
        <FindLink>
          아이디 찾기 <Chevron />
        </FindLink>
        <FindLink>
          비밀번호 찾기 <Chevron />
        </FindLink>
      </FindLinks>
      <OrLine>
        <span>다음 계정으로 로그인</span>
      </OrLine>
      <SocialGrid>
        {socials.map(([name, Icon]) => (
          <SocialButton key={name}>
            <Icon />
            <span>{name}</span>
          </SocialButton>
        ))}
      </SocialGrid>
    </CardBody>
    <Join>회원가입</Join>
  </Card>
);

const Footer = () => (
  <footer>
    <FooterTop>
      <LinkColumns>
        {columns.map(([title, items]) => (
          <div key={title}>
            <ColumnTitle>{title}</ColumnTitle>
            <ul>
              {items.map((t) => (
                <FooterLink key={t} $bold={t === "개인정보 처리방침"}>
                  {t}
                </FooterLink>
              ))}
            </ul>
          </div>
        ))}
      </LinkColumns>
      <FooterSide>
        <SnsRow>
          <SnsLink><FaYoutube size={19} /></SnsLink>
          <SnsLink><FaInstagram size={20} /></SnsLink>
          <SnsLink><FaFacebookF size={17} /></SnsLink>
          <SnsLink><FaTwitter size={16} /></SnsLink>
        </SnsRow>
        <StoreRow>
          <StoreBadge $pad={9} $gap={8}>
            <PlayIcon />
            <StoreText $font={`"Open Sans", sans-serif`} $size={16.5} $track={-0.65} $small={9} $smallTrack={-0.25}>
              <small>GET IT ON</small>
              Google Play
            </StoreText>
          </StoreBadge>
          <StoreBadge $pad={9} $gap={7}>
            <FaApple size={25} />
            <StoreText $font={`"Noto Sans", sans-serif`} $size={17.4} $track={-0.25} $small={8.4} $smallTrack={0.55}>
              <small>Download on the</small>
              App Store
            </StoreText>
          </StoreBadge>
        </StoreRow>
      </FooterSide>
    </FooterTop>
    <LocaleBar>
      <GlobeIcon />
      <LocaleText $left={4}>대한민국</LocaleText>
      <Caret />
      <Bar $height={17} $margin="0 14px 0 9px" />
      <LocaleText $left={0} $current>한국어</LocaleText>
      <LocaleText $left={17.5} $color="#555">English</LocaleText>
    </LocaleBar>
    <Legal>
      <LegalText>
        <LegalLine>
          <Bar $height={12} $margin="6px 10px 0 11px" />
          주소 : 서울특별시 강서구 하늘길 260
          <Bar $height={12} $margin="6px 11px 0 11px" />
          전화 : 1588-2001 / 02-2656-2001
        </LegalLine>
        <LegalLine>
          사업자등록번호 : 110-81-14794
          <Bar $height={12} $margin="6px 11px 0 11px" />
          통신판매업신고 : 강서 제 16-3010
          <Bar $height={12} $margin="6px 11px 0 11px" />
          개인정보보호책임자 : 장성현 대한항공 부사장
        </LegalLine>
        <Copyright>© 1997-2022 KOREAN AIR</Copyright>
      </LegalText>
      <Badges>
        <Badge $top={0}><WaBadge /></Badge>
        <Badge $top={3} $left={33}><IsmsBadge /></Badge>
        <Badge $top={3} $left={45}><CcmBadge /></Badge>
        <Badge $top={3} $left={46}><SkytraxBadge /></Badge>
      </Badges>
    </Legal>
  </footer>
);

export default function App() {
  return (
    <Desktop>
      <GlobalStyle />
      <Tabs />
      <BrowserBar />
      <WindowBody>
        <Viewport>
          <LoadingBar />
          <Page>
            <Header>
              <Brand>
                <BrandLogo />
              </Brand>
              <MainNav>
                <span>예매</span>
                <span>공항</span>
                <span>기내</span>
                <span>스카이패스</span>
              </MainNav>
              <HeaderIcons>
                <HeaderIcon><PersonIcon /></HeaderIcon>
                <HeaderIcon $width={61}><BellIcon /></HeaderIcon>
                <HeaderIcon $width={57.4}><CartIcon /></HeaderIcon>
                <HeaderIcon $width={60}><SearchIcon /></HeaderIcon>
              </HeaderIcons>
            </Header>
            <Main>
              <LoginCard />
            </Main>
            <Footer />
          </Page>
          <Scrollbar>
            <Arrow $up />
            <Thumb $height={509} $gap={7} />
            <Thumb $height={591} $gap={523} />
            <Arrow $gap={6} />
          </Scrollbar>
        </Viewport>
        <EdgeSidebar />
      </WindowBody>
    </Desktop>
  );
}
